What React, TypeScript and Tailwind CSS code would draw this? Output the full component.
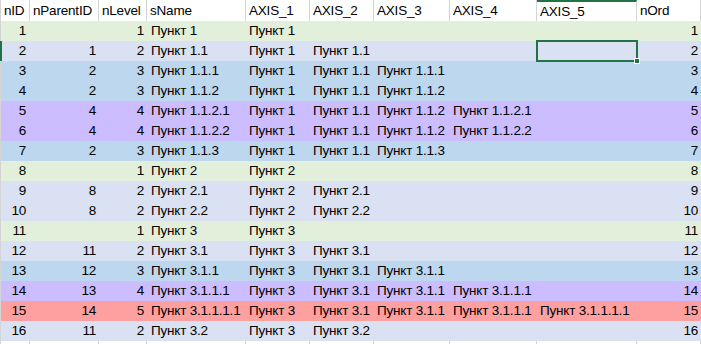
import React from "react";

type Row = {
  id: number;
  parent?: number;
  level: number;
  name: string;
};

const rows: Row[] = [
  { id: 1, level: 1, name: "1" },
  { id: 2, parent: 1, level: 2, name: "1.1" },
  { id: 3, parent: 2, level: 3, name: "1.1.1" },
  { id: 4, parent: 2, level: 3, name: "1.1.2" },
  { id: 5, parent: 4, level: 4, name: "1.1.2.1" },
  { id: 6, parent: 4, level: 4, name: "1.1.2.2" },
  { id: 7, parent: 2, level: 3, name: "1.1.3" },
  { id: 8, level: 1, name: "2" },
  { id: 9, parent: 8, level: 2, name: "2.1" },
  { id: 10, parent: 8, level: 2, name: "2.2" },
  { id: 11, level: 1, name: "3" },
  { id: 12, parent: 11, level: 2, name: "3.1" },
  { id: 13, parent: 12, level: 3, name: "3.1.1" },
  { id: 14, parent: 13, level: 4, name: "3.1.1.1" },
  { id: 15, parent: 14, level: 5, name: "3.1.1.1.1" },
  { id: 16, parent: 11, level: 2, name: "3.2" },
];

const levelBg: Record<number, string> = {
  1: "bg-[#e2efda]",
  2: "bg-[#d9e1f2]",
  3: "bg-[#bdd7ee]",
  4: "bg-[#cbbdff]",
  5: "bg-[#ffa0a0]",
};

const headers = ["nID", "nParentID", "nLevel", "sName", "AXIS_1", "AXIS_2", "AXIS_3", "AXIS_4", "AXIS_5", "nOrd"];

const gridCols = "grid grid-cols-[30px_69px_48px_99px_64px_64px_76px_87px_100px_64px]";

// axis path: "1.1.2" -> ["Пункт 1", "Пункт 1.1", "Пункт 1.1.2"]
const axes = (name: string) => {
  const parts = name.split(".");
  return parts.map((_, i) => "Пункт " + parts.slice(0, i + 1).join("."));
};

export default function App() {
  return (
    <div className="w-[701px] h-[344px] bg-white overflow-hidden font-['Liberation_Sans',Arial,sans-serif] text-[13.5px] tracking-[-0.2px] text-black leading-none">
      <div className={`${gridCols} h-[21px]`}>
        {headers.map((h, i) => (
          <div
            key={h}
            className={`flex items-center px-[3px] border-r border-[#d4d4d4] ${i === 0 ? "border-l" : ""} ${
              h === "AXIS_5" ? "border-t-2 border-t-[#217346]" : ""
            }`}
          >
            {h}
          </div>
        ))}
      </div>

      {rows.map((r) => {
        const ax = axes(r.name);
        const cells = [0, 1, 2, 3, 4].map((i) => ax[i] ?? "");
        return (
          <div key={r.id} className={`${gridCols} h-[20px] ${levelBg[r.level]}`}>
            <div
              className={`flex items-center justify-end pr-[4px] ${
                r.id === 2 ? "border-l-2 border-[#217346]" : "border-l border-[#d4d4d4]"
              }`}
            >
              {r.id}
            </div>
            <div className="flex items-center justify-end pr-[3px]">{r.parent ?? ""}</div>
            <div className="flex items-center justify-end pr-[3px]">{r.level}</div>
            <div className="flex items-center pl-[4px] whitespace-nowrap">Пункт {r.name}</div>
            {cells.map((c, i) => (
              <div key={i} className="relative flex items-center pl-[3px] whitespace-nowrap">
                {c}
                {r.id === 2 && i === 4 && (
                  <>
                    <div className="absolute -left-[1px] -top-[1px] w-[102px] h-[22px] border-2 border-[#217346]" />
                    <div className="absolute left-[97px] top-[17px] w-[6px] h-[6px] bg-[#217346] border border-white" />
                  </>
                )}
              </div>
            ))}
            <div className="flex items-center justify-end pr-[3px]">{r.id}</div>
          </div>
        );
      })}

      <div className={`${gridCols} h-[3px]`}>
        {headers.map((h, i) => (
          <div key={h} className={`border-r border-[#d4d4d4] ${i === 0 ? "border-l" : ""}`} />
        ))}
      </div>
    </div>
  );
}
